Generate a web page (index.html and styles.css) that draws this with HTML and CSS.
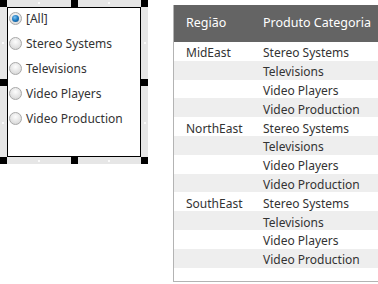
FILE: index.html
```html
<!DOCTYPE html>
<html>
<head>
  <meta charset="utf-8">
  <link rel="stylesheet" href="styles.css">
  <title>Categorias</title>
</head>
<body>
  <div class="frame">
    <span class="grip g1"></span><span class="grip g2"></span><span class="grip g3"></span>
    <span class="grip g4"></span><span class="grip g5"></span>
    <span class="grip g6"></span><span class="grip g7"></span><span class="grip g8"></span>
    <span class="dot d1"></span><span class="dot d2"></span><span class="dot d3"></span><span class="dot d4"></span>
    <span class="dot d5"></span><span class="dot d6"></span><span class="dot d7"></span><span class="dot d8"></span>
    <div class="box">
      <label class="opt"><span class="radio on"></span>[All]</label>
      <label class="opt"><span class="radio"></span>Stereo Systems</label>
      <label class="opt"><span class="radio"></span>Televisions</label>
      <label class="opt"><span class="radio"></span>Video Players</label>
      <label class="opt"><span class="radio"></span>Video Production</label>
    </div>
  </div>

  <div class="panel">
    <table class="grid">
      <thead>
        <tr><th class="c1">Região</th><th>Produto Categoria</th></tr>
      </thead>
      <tbody>
        <tr><td class="c1">MidEast</td><td>Stereo Systems</td></tr>
        <tr><td class="c1"></td><td>Televisions</td></tr>
        <tr><td class="c1"></td><td>Video Players</td></tr>
        <tr><td class="c1"></td><td>Video Production</td></tr>
        <tr><td class="c1">NorthEast</td><td>Stereo Systems</td></tr>
        <tr><td class="c1"></td><td>Televisions</td></tr>
        <tr><td class="c1"></td><td>Video Players</td></tr>
        <tr><td class="c1"></td><td>Video Production</td></tr>
        <tr><td class="c1">SouthEast</td><td>Stereo Systems</td></tr>
        <tr><td class="c1"></td><td>Televisions</td></tr>
        <tr><td class="c1"></td><td>Video Players</td></tr>
        <tr><td class="c1"></td><td>Video Production</td></tr>
      </tbody>
    </table>
  </div>
</body>
</html>
```

FILE: styles.css
```css
body {
  margin: 0;
  width: 378px;
  height: 284px;
  overflow: hidden;
  display: flex;
  align-items: flex-start;
  gap: 25px;
  background: #fff;
  font-family: "Noto Sans", "DejaVu Sans", sans-serif;
  font-size: 12px;
  color: #333;
}

/* designer selection frame */
.frame {
  position: relative;
  flex: none;
  width: 148px;
  height: 164px;
  padding: 7px;
  box-sizing: border-box;
  background: #e6e6e6;
}
.box {
  height: 100%;
  box-sizing: border-box;
  border: 1px solid #000;
  background: #fff;
  padding-top: 1px;
  display: flex;
  flex-direction: column;
  gap: 7px;
}
.grip {
  position: absolute;
  width: 7px;
  height: 7px;
  background: #000;
}
.g1 { left: 0; top: 0; }
.g2 { left: 71px; top: 0; }
.g3 { left: 141px; top: 0; }
.g4 { left: 0; top: 79px; }
.g5 { left: 141px; top: 79px; }
.g6 { left: 0; top: 157px; }
.g7 { left: 71px; top: 157px; }
.g8 { left: 141px; top: 157px; }
.dot {
  position: absolute;
  width: 2px;
  height: 2px;
  background: #fafafa;
}
.d1 { left: 38px; top: 2px; }
.d2 { left: 108px; top: 2px; }
.d3 { left: 38px; top: 160px; }
.d4 { left: 108px; top: 160px; }
.d5 { left: 2px; top: 42px; }
.d6 { left: 2px; top: 122px; }
.d7 { left: 144px; top: 42px; }
.d8 { left: 144px; top: 122px; }

.opt {
  display: flex;
  align-items: center;
  gap: 4px;
  height: 18px;
  padding-left: 1px;
  font-size: 12px;
  color: #333;
}
.radio {
  flex: none;
  width: 11px;
  height: 11px;
  border-radius: 50%;
  border: 1px solid #a8a8a8;
  background: radial-gradient(circle at 50% 35%, #fdfdfd 0%, #e4e4e4 55%, #cfcfcf 100%);
  display: flex;
  align-items: center;
  justify-content: center;
}
.radio.on::after {
  content: "";
  width: 7px;
  height: 7px;
  border-radius: 50%;
  background: radial-gradient(circle at 40% 35%, #7fc4f2 0%, #1c79c0 50%, #0b4a80 100%);
}

/* report table */
.panel {
  flex: none;
  margin-top: 5px;
  width: 215px;
  height: 277px;
  box-sizing: border-box;
  border: 1px solid #b3b3b3;
  border-top: none;
  background: #fff;
}
.grid {
  border-collapse: collapse;
  width: 100%;
  font-size: 12px;
}
.grid th {
  height: 35px;
  padding: 0 0 2px 12px;
  background: #646464;
  color: #fff;
  font-weight: normal;
  font-size: 12.5px;
  text-align: left;
}
.grid td {
  height: 18.8px;
  padding: 3px 0 0 12px;
  box-sizing: border-box;
  line-height: 15px;
  color: #333;
}
.grid .c1 {
  width: 65px;
}
.grid tbody tr:nth-child(even) td {
  background: #eeeeee;
}
```
